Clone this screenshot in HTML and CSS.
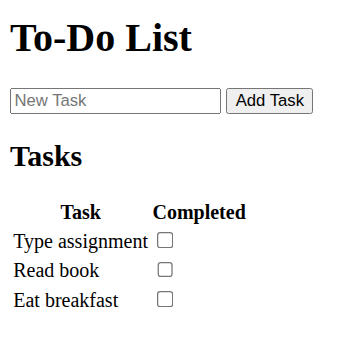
FILE: index.html
```html
<!DOCTYPE html>
<html>
<head>
<meta charset="utf-8">
<link rel="stylesheet" href="styles.css">
</head>
<body class="page">
<h1 class="title">To-Do List</h1>
<form class="add-form">
<input class="task-input" type="text" placeholder="New Task"> <button class="add-btn" type="button">Add Task</button>
</form>
<h2 class="subtitle">Tasks</h2>
<table class="task-table">
<thead>
<tr><th>Task</th><th>Completed</th></tr>
</thead>
<tbody>
<tr><td>Type assignment</td><td><input type="checkbox"></td></tr>
<tr><td>Read book</td><td><input type="checkbox"></td></tr>
<tr><td>Eat breakfast</td><td><input type="checkbox"></td></tr>
</tbody>
</table>
</body>
</html>
```
FILE: styles.css
```css
html {
  zoom: 1.25;
}
.page {
  font-family: "Liberation Serif", serif;
  color: #000;
  background: #fff;
  margin: 11px 8px 8px;
}
.title {
  margin-top: 0;
}
.task-input, .add-btn {
  font-family: "Liberation Sans", Arial, sans-serif;
  font-size: 13.333px;
}
.task-input {
  box-sizing: border-box;
  width: 169px;
}
```
